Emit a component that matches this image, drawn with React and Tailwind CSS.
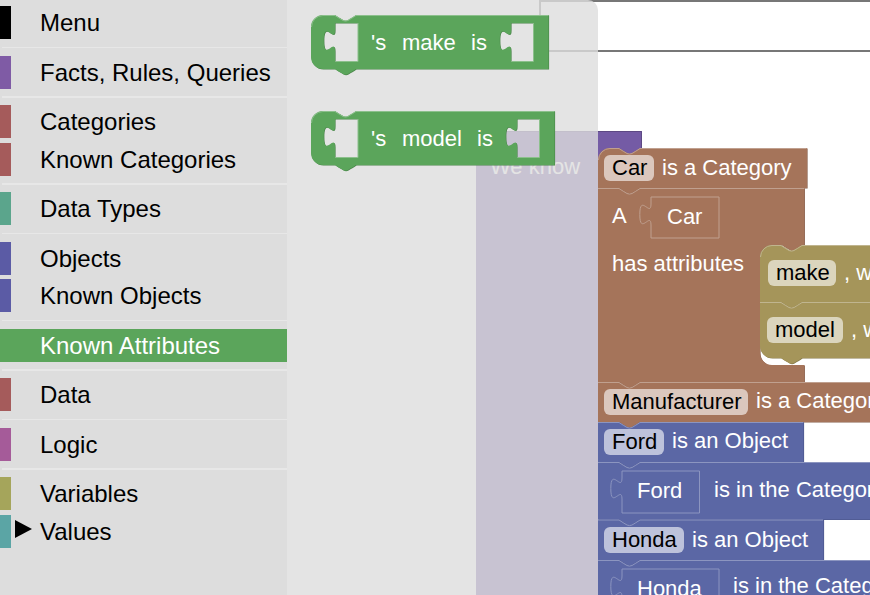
const SANS = { fontFamily: '"Liberation Sans", Arial, sans-serif' };

const C = {
  brown: { main: '#a5745a', light: '#c0a08f', dark: '#845d48', field: '#dbc7bd' },
  blue: { main: '#5b67a5', light: '#8c95c0', dark: '#495284', field: '#bdc2db' },
  olive: { main: '#a5955a', light: '#c0b58f', dark: '#847748', field: '#dbd5bd' },
  green: { main: '#5ba55b', light: '#8cc08c', dark: '#498449', field: '#bddbbd' },
  purple: { main: '#745ba5', light: '#9d8cc0', dark: '#5d4984', field: '#c7bddb' },
};

const N = 'c3,2 5.5,3.5 8,5 q2.5,1.2 5,0 c2.5,-1.5 5,-3 8,-5';
const NB = 'c-3,2 -5.5,3.5 -8,5 q-2.5,1.2 -5,0 c-2.5,-1.5 -5,-3 -8,-5';
const R = 12;

function outline(x, y, w, h, { rt, rb, nt = true, nb = true, nx = 21 } = {}) {
  let d = rt ? `M${x},${y + R} a${R},${R} 0 0 1 ${R},${-R} ` : `M${x},${y} `;
  if (nt) d += `H${x + nx} ${N} `;
  d += `H${x + w} V${y + h} `;
  if (nb) d += `H${x + nx + 21} ${NB} `;
  d += rb ? `H${x + R} a${R},${R} 0 0 1 ${-R},${-R} Z` : `H${x} Z`;
  return d;
}

function topEdge(x, y, w, { rt, nt = true, nx = 21 } = {}) {
  const Y = y + 0.5;
  let d = rt ? `M${x + 0.5},${y + R} a${R - 0.5},${R - 0.5} 0 0 1 ${R - 0.5},${-(R - 0.5)} ` : `M${x},${Y} `;
  if (nt) d += `H${x + nx} ${N} `;
  d += `H${x + w - 0.5}`;
  return d;
}

function hole(x, y, w, h) {
  return `M${x},${y} h${w} v${h} h${-w} V${y + 28} c0,-14 -11.2,11.2 -11.2,-10.5 s11.2,3.5 11.2,-10.5 Z`;
}

function Shape({ d, top, c }) {
  return (
    <g>
      <path d={d} fill={c.dark} fillRule="evenodd" transform="translate(0.6,0.6)" />
      <path d={d} fill={c.main} fillRule="evenodd" />
      {top && <path d={top} fill="none" stroke={c.light} strokeWidth="1" />}
    </g>
  );
}

function T({ x, y, children, dark, className = '' }) {
  return (
    <text x={x} y={y} style={SANS} className={`text-[22px] ${dark ? 'fill-black' : 'fill-white'} ${className}`}>
      {children}
    </text>
  );
}

function Field({ x, y, w, c, children }) {
  return (
    <g>
      <rect x={x} y={y} width={w} height="26" rx="6" fill={c.field} />
      <T x={x + 8} y={y + 20} dark>{children}</T>
    </g>
  );
}

function Shadow({ x, y, w, h, c, label, tx = 15 }) {
  return (
    <g>
      <path d={hole(x, y, w, h)} fill={c.main} stroke={c.light} strokeWidth="1" />
      <T x={x + tx} y={y + 27}>{label}</T>
    </g>
  );
}

function Flat({ x, y, w, h, c, rt, rb, nt = true, nb = true, children }) {
  const o = { rt, rb, nt, nb };
  return (
    <g>
      <Shape d={outline(x, y, w, h, o)} top={topEdge(x, y, w, o)} c={c} />
      {children}
    </g>
  );
}

function GreenBlock({ y, w, label, isX, hx }) {
  const x = 311;
  const o = { rt: true, rb: true, nx: 24 };
  const d = `${outline(x, y, w, 54, o)} ${hole(335, y + 8, 23, 39)} ${hole(hx, y + 8, 22, 39)}`;
  const edge = (hxx) => `M${hxx + 0.5},${y + 46.5} H${hxx + 22.5 + (hxx === 335 ? 0.5 : 0)} V${y + 8}`;
  return (
    <g>
      <Shape d={d} top={topEdge(x, y, w, o)} c={C.green} />
      <path d={`${edge(335)} ${edge(hx)}`} fill="none" stroke={C.green.light} strokeWidth="1" />
      <T x={371} y={y + 35}>'s</T>
      <T x={402} y={y + 35}>{label}</T>
      <T x={isX} y={y + 35}>is</T>
    </g>
  );
}

function Workspace() {
  const brownC = C.brown;
  const attrBody =
    `M598,188 H619 ${N} H804.3 V245 H803 ${NB} H772 a12,12 0 0 0 -12,12 V353 a12,12 0 0 0 12,12 H804.3 V382 H640 ${NB} H598 Z`;
  return (
    <svg viewBox="287 0 583 595" className="absolute inset-0 block h-[595px] w-[583px]">
      <path d="M476,131 H642 V165 H598 V600 H476 Z" fill={C.purple.main} />
      <path d="M476,131.5 H641.5 V160" fill="none" stroke={C.purple.dark} strokeWidth="1" />
      <T x={490} y={174}>We know</T>

      <Flat x={598} y={148} w={209} h={40} c={brownC} rt>
        <Field x={604} y={155} w={50} c={brownC}>Car</Field>
        <T x={662} y={175}>is a Category</T>
      </Flat>

      <Shape d={attrBody} top={`M598,188.5 H619 ${N} H804`} c={brownC} />
      <T x={612} y={223}>A</T>
      <Shadow x={651} y={197} w={68} h={41} c={brownC} label="Car" tx={16} />
      <T x={612} y={271}>has attributes</T>

      <Flat x={760} y={245} w={200} h={57} c={C.olive} rt>
        <Field x={768} y={260} w={68} c={C.olive}>make</Field>
        <T x={844} y={280}>, with type</T>
      </Flat>
      <Flat x={760} y={302} w={200} h={56} c={C.olive} rb>
        <Field x={767} y={317} w={76} c={C.olive}>model</Field>
        <T x={851} y={337}>, with type</T>
      </Flat>

      <Flat x={598} y={382} w={320} h={40} c={brownC}>
        <Field x={604} y={389} w={144} c={brownC}>Manufacturer</Field>
        <T x={756} y={408}>is a Category</T>
      </Flat>

      <Flat x={598} y={422} w={205.5} h={40} c={C.blue}>
        <Field x={604} y={429} w={60} c={C.blue}>Ford</Field>
        <T x={672} y={448}>is an Object</T>
      </Flat>
      <Flat x={598} y={462} w={340} h={57.5} c={C.blue}>
        <Shadow x={622} y={471} w={77.5} h={42} c={C.blue} label="Ford" />
        <T x={714} y={497}>is in the Category</T>
      </Flat>
      <Flat x={598} y={519.5} w={225.5} h={40.5} c={C.blue}>
        <Field x={604} y={527} w={80} c={C.blue}>Honda</Field>
        <T x={692} y={547}>is an Object</T>
      </Flat>
      <Flat x={598} y={560} w={360} h={58} c={C.blue}>
        <Shadow x={622} y={569} w={97} h={42} c={C.blue} label="Honda" />
        <T x={733} y={593}>is in the Category</T>
      </Flat>
    </svg>
  );
}

function Flyout() {
  return (
    <svg viewBox="287 0 311 595" className="absolute inset-0 block h-[595px] w-[311px]">
      <GreenBlock y={15} w={237.5} label="make" isX={471} hx={511} />
      <GreenBlock y={111} w={243.5} label="model" isX={477} hx={517} />
    </svg>
  );
}

function Row({ label, color, selected, arrow, className = '' }) {
  return (
    <div
      className={`relative flex h-[33px] items-center text-[24px] leading-[33px] ${
        selected ? 'bg-[#5ba55b] text-white' : 'text-black'
      } ${className}`}
    >
      <span className="h-full w-[11px] shrink-0" style={{ backgroundColor: color }} />
      <span className="ml-[29px]">{label}</span>
      {arrow && (
        <svg viewBox="0 0 17 18" className="absolute left-[15px] top-[5px] h-[18px] w-[17px]">
          <path d="M0,0 L17,9 L0,18 Z" fill="#000" />
        </svg>
      )}
    </div>
  );
}

function Sep({ h }) {
  return <div className={`ml-[2px] bg-[#e7e7e7] ${h}`} />;
}

function Sidebar() {
  return (
    <aside className="flex h-[595px] w-[287px] shrink-0 flex-col bg-[#dddddd]" style={SANS}>
      <div className="pb-[8px] pt-[6px]">
        <Row label="Menu" color="#000000" />
      </div>
      <Sep h="h-[1px]" />
      <div className="pb-[7px] pt-[8px]">
        <Row label="Facts, Rules, Queries" color="#7f5ba5" />
      </div>
      <Sep h="h-[2px]" />
      <div className="flex flex-col gap-[5px] pb-[7px] pt-[7px]">
        <Row label="Categories" color="#a55b5b" />
        <Row label="Known Categories" color="#a55b5b" />
      </div>
      <Sep h="h-[2px]" />
      <div className="pb-[8px] pt-[7px]">
        <Row label="Data Types" color="#5ba58c" />
      </div>
      <Sep h="h-[1px]" />
      <div className="flex flex-col gap-[4px] pb-[8px] pt-[8px]">
        <Row label="Objects" color="#5b5ba5" />
        <Row label="Known Objects" color="#5b5ba5" />
      </div>
      <Sep h="h-[1px]" />
      <div className="pb-[7px] pt-[8px]">
        <Row label="Known Attributes" color="#5ba55b" selected />
      </div>
      <Sep h="h-[2px]" />
      <div className="pb-[8px] pt-[7px]">
        <Row label="Data" color="#a55b5b" />
      </div>
      <Sep h="h-[1px]" />
      <div className="pb-[7px] pt-[8px]">
        <Row label="Logic" color="#a55b99" />
      </div>
      <Sep h="h-[2px]" />
      <div className="flex flex-col gap-[5px] pt-[7px]">
        <Row label="Variables" color="#a5a55b" />
        <Row label="Values" color="#5ba5a5" arrow />
      </div>
    </aside>
  );
}

export default function App() {
  return (
    <div className="flex h-[595px] w-[870px] overflow-hidden bg-white">
      <Sidebar />
      <main className="relative flex-1 pl-[252px]">
        <div className="h-[52px] border-2 border-r-0 border-[#777777]" />
        <Workspace />
        <div className="absolute inset-y-0 left-0 w-[311px] rounded-tr-[10px] bg-[#dddddd]/80" />
        <Flyout />
      </main>
    </div>
  );
}
